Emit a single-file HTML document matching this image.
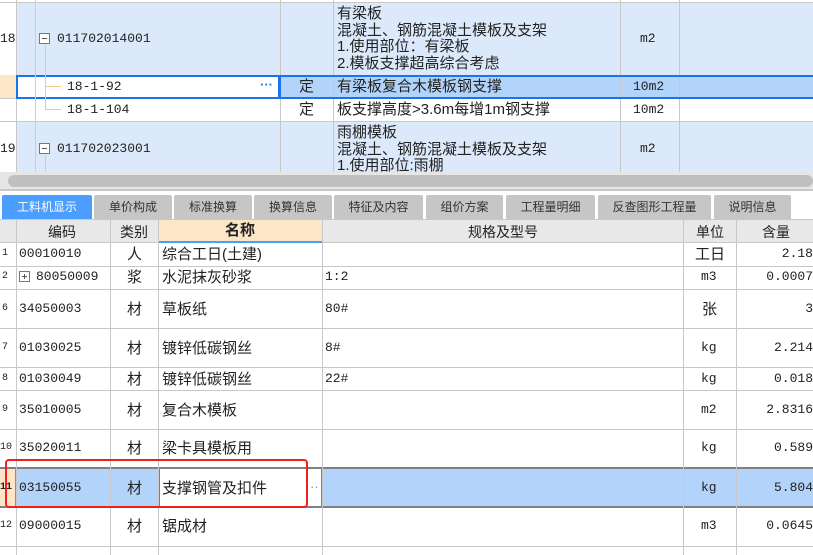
<!DOCTYPE html>
<html><head><meta charset="utf-8"><style>
*{margin:0;padding:0;box-sizing:border-box}
body{width:813px;height:555px;overflow:hidden;background:#fff;position:relative;font-family:"Liberation Sans","Noto Sans CJK SC",sans-serif;font-size:13px;color:#222}
.a{position:absolute;white-space:nowrap;line-height:16px}
.m{font-family:"Liberation Mono","Noto Sans CJK SC",monospace;font-size:13px}
.tab{position:absolute;top:195px;height:24px;background:#c6c6c6;font-size:12px;text-align:center;line-height:24px;color:#333;border-radius:2px 2px 0 0}
.box{position:absolute;width:11px;height:11px;border:1px solid #777;background:#fff}
.box:before{content:"";position:absolute;left:2px;top:4px;width:5px;height:1px;background:#555}
.plus:after{content:"";position:absolute;left:4px;top:2px;width:1px;height:5px;background:#555}
.t{font-size:15px}
</style></head><body>
<div class="a" style="left:0;top:0;width:813px;height:172px;background:#fff"></div>
<div class="a" style="left:16px;top:2px;width:797px;height:73px;background:#dce9fb"></div>
<div class="a" style="left:16px;top:121px;width:797px;height:51px;background:#dce9fb"></div>
<div class="a" style="left:280px;top:75px;width:533px;height:23px;background:#b3d4fa"></div>
<div class="a" style="left:0;top:75px;width:16px;height:23px;background:#fde6c8"></div>
<div class="a" style="left:0;top:2px;width:813px;height:1px;background:#c8c8c8"></div>
<div class="a" style="left:0;top:98px;width:813px;height:1px;background:#c8c8c8"></div>
<div class="a" style="left:0;top:121px;width:813px;height:1px;background:#c8c8c8"></div>
<div class="a" style="left:16px;top:0;width:1px;height:172px;background:#c8c8c8"></div>
<div class="a" style="left:280px;top:0;width:1px;height:172px;background:#c8c8c8"></div>
<div class="a" style="left:333px;top:0;width:1px;height:172px;background:#c8c8c8"></div>
<div class="a" style="left:620px;top:0;width:1px;height:172px;background:#c8c8c8"></div>
<div class="a" style="left:679px;top:0;width:1px;height:172px;background:#c8c8c8"></div>
<div class="a" style="left:16px;top:75px;width:797px;height:2px;background:#1a73e8"></div>
<div class="a" style="left:16px;top:97px;width:797px;height:2px;background:#1a73e8"></div>
<div class="a" style="left:16px;top:75px;width:264px;height:24px;border:2px solid #1a73e8;background:#fff"></div>
<div class="a" style="left:279px;top:75px;width:2px;height:24px;background:#1a73e8"></div>
<div class="a" style="left:35px;top:0;width:1px;height:172px;background:#f5c88a"></div>
<div class="a" style="left:45px;top:45px;width:1px;height:65px;background:#f5c88a"></div>
<div class="a" style="left:45px;top:86px;width:16px;height:1px;background:#f5c88a"></div>
<div class="a" style="left:45px;top:109px;width:16px;height:1px;background:#f5c88a"></div>
<div class="a" style="left:45px;top:155px;width:1px;height:17px;background:#f5c88a"></div>
<div class="box" style="left:39px;top:33px"></div>
<div class="box" style="left:39px;top:143px"></div>
<div class="a m" style="left:0;top:31px;">18</div>
<div class="a m" style="left:0;top:141px;">19</div>
<div class="a m" style="left:57px;top:31px">011702014001</div>
<div class="a m" style="left:57px;top:141px">011702023001</div>
<div class="a m" style="left:67px;top:79px">18-1-92</div>
<div class="a" style="left:260px;top:77px;color:#1a73e8;font-weight:bold">···</div>
<div class="a m" style="left:67px;top:102px">18-1-104</div>
<div class="a t" style="left:299px;top:79px">定</div>
<div class="a t" style="left:299px;top:102px">定</div>
<div class="a t" style="left:337px;top:6px;line-height:16.5px">有梁板<br>混凝土、钢筋混凝土模板及支架<br>1.使用部位：有梁板<br>2.模板支撑超高综合考虑</div>
<div class="a t" style="left:337px;top:79px">有梁板复合木模板钢支撑</div>
<div class="a t" style="left:337px;top:102px">板支撑高度&gt;3.6m每增1m钢支撑</div>
<div class="a t" style="left:337px;top:125px;line-height:16.5px">雨棚模板<br>混凝土、钢筋混凝土模板及支架<br>1.使用部位:雨棚</div>
<div class="a m" style="left:640px;top:31px">m2</div>
<div class="a m" style="left:633px;top:79px">10m2</div>
<div class="a m" style="left:633px;top:102px">10m2</div>
<div class="a m" style="left:640px;top:141px">m2</div>
<div class="a" style="left:0;top:172px;width:813px;height:17px;background:#e6e6e6"></div>
<div class="a" style="left:8px;top:175px;width:805px;height:12px;background:#c0c0c0;border-radius:6px"></div>
<div class="a" style="left:0;top:189px;width:813px;height:2px;background:#c8c8c8"></div>
<div class="tab" style="left:2px;width:90px;background:#4a9eff;color:#fff">工料机显示</div>
<div class="tab" style="left:94px;width:78px">单价构成</div>
<div class="tab" style="left:174px;width:78px">标准换算</div>
<div class="tab" style="left:254px;width:78px">换算信息</div>
<div class="tab" style="left:334px;width:89px">特征及内容</div>
<div class="tab" style="left:426px;width:77px">组价方案</div>
<div class="tab" style="left:506px;width:89px">工程量明细</div>
<div class="tab" style="left:598px;width:113px">反查图形工程量</div>
<div class="tab" style="left:714px;width:77px">说明信息</div>
<div class="a" style="left:0;top:219px;width:813px;height:1px;background:#c8c8c8"></div>
<div class="a" style="left:0;top:220px;width:813px;height:23px;background:#e8e8e8;border-bottom:1px solid #c8c8c8"></div>
<div class="a" style="left:158px;top:220px;width:164px;height:23px;background:#fde6c8;border-bottom:2px solid #4a9eff"></div>
<div class="a" style="left:48px;top:224px;font-size:14px">编码</div>
<div class="a" style="left:120px;top:224px;font-size:14px">类别</div>
<div class="a" style="left:225px;top:223px;font-size:15px;font-weight:bold">名称</div>
<div class="a" style="left:468px;top:224px;font-size:14px">规格及型号</div>
<div class="a" style="left:696px;top:224px;font-size:14px">单位</div>
<div class="a" style="left:762px;top:224px;font-size:14px">含量</div>
<div class="a" style="left:0;top:468px;width:16px;height:39px;background:#fde6c8"></div>
<div class="a" style="left:16px;top:468px;width:797px;height:39px;background:#b3d4fa"></div>
<div class="a" style="left:158px;top:468px;width:164px;height:39px;background:#fff"></div>
<div class="a" style="left:0;top:467px;width:813px;height:2px;background:#808080"></div>
<div class="a" style="left:0;top:506px;width:813px;height:2px;background:#808080"></div>
<div class="a" style="left:158px;top:468px;width:2px;height:39px;background:#808080"></div>
<div class="a" style="left:321px;top:468px;width:2px;height:39px;background:#808080"></div>
<div class="a" style="left:15px;top:468px;width:2px;height:39px;background:#4a9eff"></div>
<div class="a" style="left:0;top:266px;width:813px;height:1px;background:#c8c8c8"></div>
<div class="a" style="left:0;top:289px;width:813px;height:1px;background:#c8c8c8"></div>
<div class="a" style="left:0;top:328px;width:813px;height:1px;background:#c8c8c8"></div>
<div class="a" style="left:0;top:367px;width:813px;height:1px;background:#c8c8c8"></div>
<div class="a" style="left:0;top:390px;width:813px;height:1px;background:#c8c8c8"></div>
<div class="a" style="left:0;top:429px;width:813px;height:1px;background:#c8c8c8"></div>
<div class="a" style="left:0;top:546px;width:813px;height:1px;background:#c8c8c8"></div>
<div class="a" style="left:16px;top:220px;width:1px;height:335px;background:#c8c8c8"></div>
<div class="a" style="left:110px;top:220px;width:1px;height:335px;background:#c8c8c8"></div>
<div class="a" style="left:158px;top:220px;width:1px;height:335px;background:#c8c8c8"></div>
<div class="a" style="left:322px;top:220px;width:1px;height:335px;background:#c8c8c8"></div>
<div class="a" style="left:683px;top:220px;width:1px;height:335px;background:#c8c8c8"></div>
<div class="a" style="left:736px;top:220px;width:1px;height:335px;background:#c8c8c8"></div>
<div style="font-size:10px;font-family:'Liberation Mono',monospace">
<div class="a" style="left:2px;top:246px">1</div>
<div class="a" style="left:2px;top:269px">2</div>
<div class="a" style="left:2px;top:301px">6</div>
<div class="a" style="left:2px;top:340px">7</div>
<div class="a" style="left:2px;top:371px">8</div>
<div class="a" style="left:2px;top:402px">9</div>
<div class="a" style="left:0;top:440px">10</div>
<div class="a" style="left:0;top:480px;font-weight:bold">11</div>
<div class="a" style="left:0;top:518px">12</div>
</div>
<div class="m">
<div class="a" style="left:19px;top:246px">00010010</div>
<div class="box plus" style="left:19px;top:271px"></div>
<div class="a" style="left:36px;top:269px">80050009</div>
<div class="a" style="left:19px;top:301px">34050003</div>
<div class="a" style="left:19px;top:340px">01030025</div>
<div class="a" style="left:19px;top:371px">01030049</div>
<div class="a" style="left:19px;top:402px">35010005</div>
<div class="a" style="left:19px;top:440px">35020011</div>
<div class="a" style="left:19px;top:480px">03150055</div>
<div class="a" style="left:19px;top:518px">09000015</div>
<div class="a" style="left:325px;top:269px">1:2</div>
<div class="a" style="left:325px;top:301px">80#</div>
<div class="a" style="left:325px;top:340px">8#</div>
<div class="a" style="left:325px;top:371px">22#</div>
</div>
<div style="font-size:15px">
<div class="a" style="left:127px;top:247px">人</div>
<div class="a" style="left:127px;top:270px">浆</div>
<div class="a" style="left:127px;top:302px">材</div>
<div class="a" style="left:127px;top:341px">材</div>
<div class="a" style="left:127px;top:372px">材</div>
<div class="a" style="left:127px;top:403px">材</div>
<div class="a" style="left:127px;top:441px">材</div>
<div class="a" style="left:127px;top:481px">材</div>
<div class="a" style="left:127px;top:519px">材</div>
<div class="a" style="left:162px;top:247px">综合工日(土建)</div>
<div class="a" style="left:162px;top:270px">水泥抹灰砂浆</div>
<div class="a" style="left:162px;top:302px">草板纸</div>
<div class="a" style="left:162px;top:341px">镀锌低碳钢丝</div>
<div class="a" style="left:162px;top:372px">镀锌低碳钢丝</div>
<div class="a" style="left:162px;top:403px">复合木模板</div>
<div class="a" style="left:162px;top:441px">梁卡具模板用</div>
<div class="a" style="left:162px;top:481px">支撑钢管及扣件</div>
<div class="a" style="left:162px;top:519px">锯成材</div>
<div class="a" style="left:695px;top:247px">工日</div>
<div class="a" style="left:702px;top:302px">张</div>
</div>
<div class="a" style="left:310px;top:479px;color:#4a9eff">··</div>
<div class="m">
<div class="a" style="left:701px;top:269px">m3</div>
<div class="a" style="left:701px;top:340px">kg</div>
<div class="a" style="left:701px;top:371px">kg</div>
<div class="a" style="left:701px;top:402px">m2</div>
<div class="a" style="left:701px;top:440px">kg</div>
<div class="a" style="left:701px;top:480px">kg</div>
<div class="a" style="left:701px;top:518px">m3</div>
<div class="a" style="right:0;top:246px">2.18</div>
<div class="a" style="right:0;top:269px">0.0007</div>
<div class="a" style="right:0;top:301px">3</div>
<div class="a" style="right:0;top:340px">2.214</div>
<div class="a" style="right:0;top:371px">0.018</div>
<div class="a" style="right:0;top:402px">2.8316</div>
<div class="a" style="right:0;top:440px">0.589</div>
<div class="a" style="right:0;top:480px">5.804</div>
<div class="a" style="right:0;top:518px">0.0645</div>
</div>
<div class="a" style="left:5px;top:459px;width:303px;height:49px;border:2px solid #f02020;border-radius:4px"></div>
</body></html>
